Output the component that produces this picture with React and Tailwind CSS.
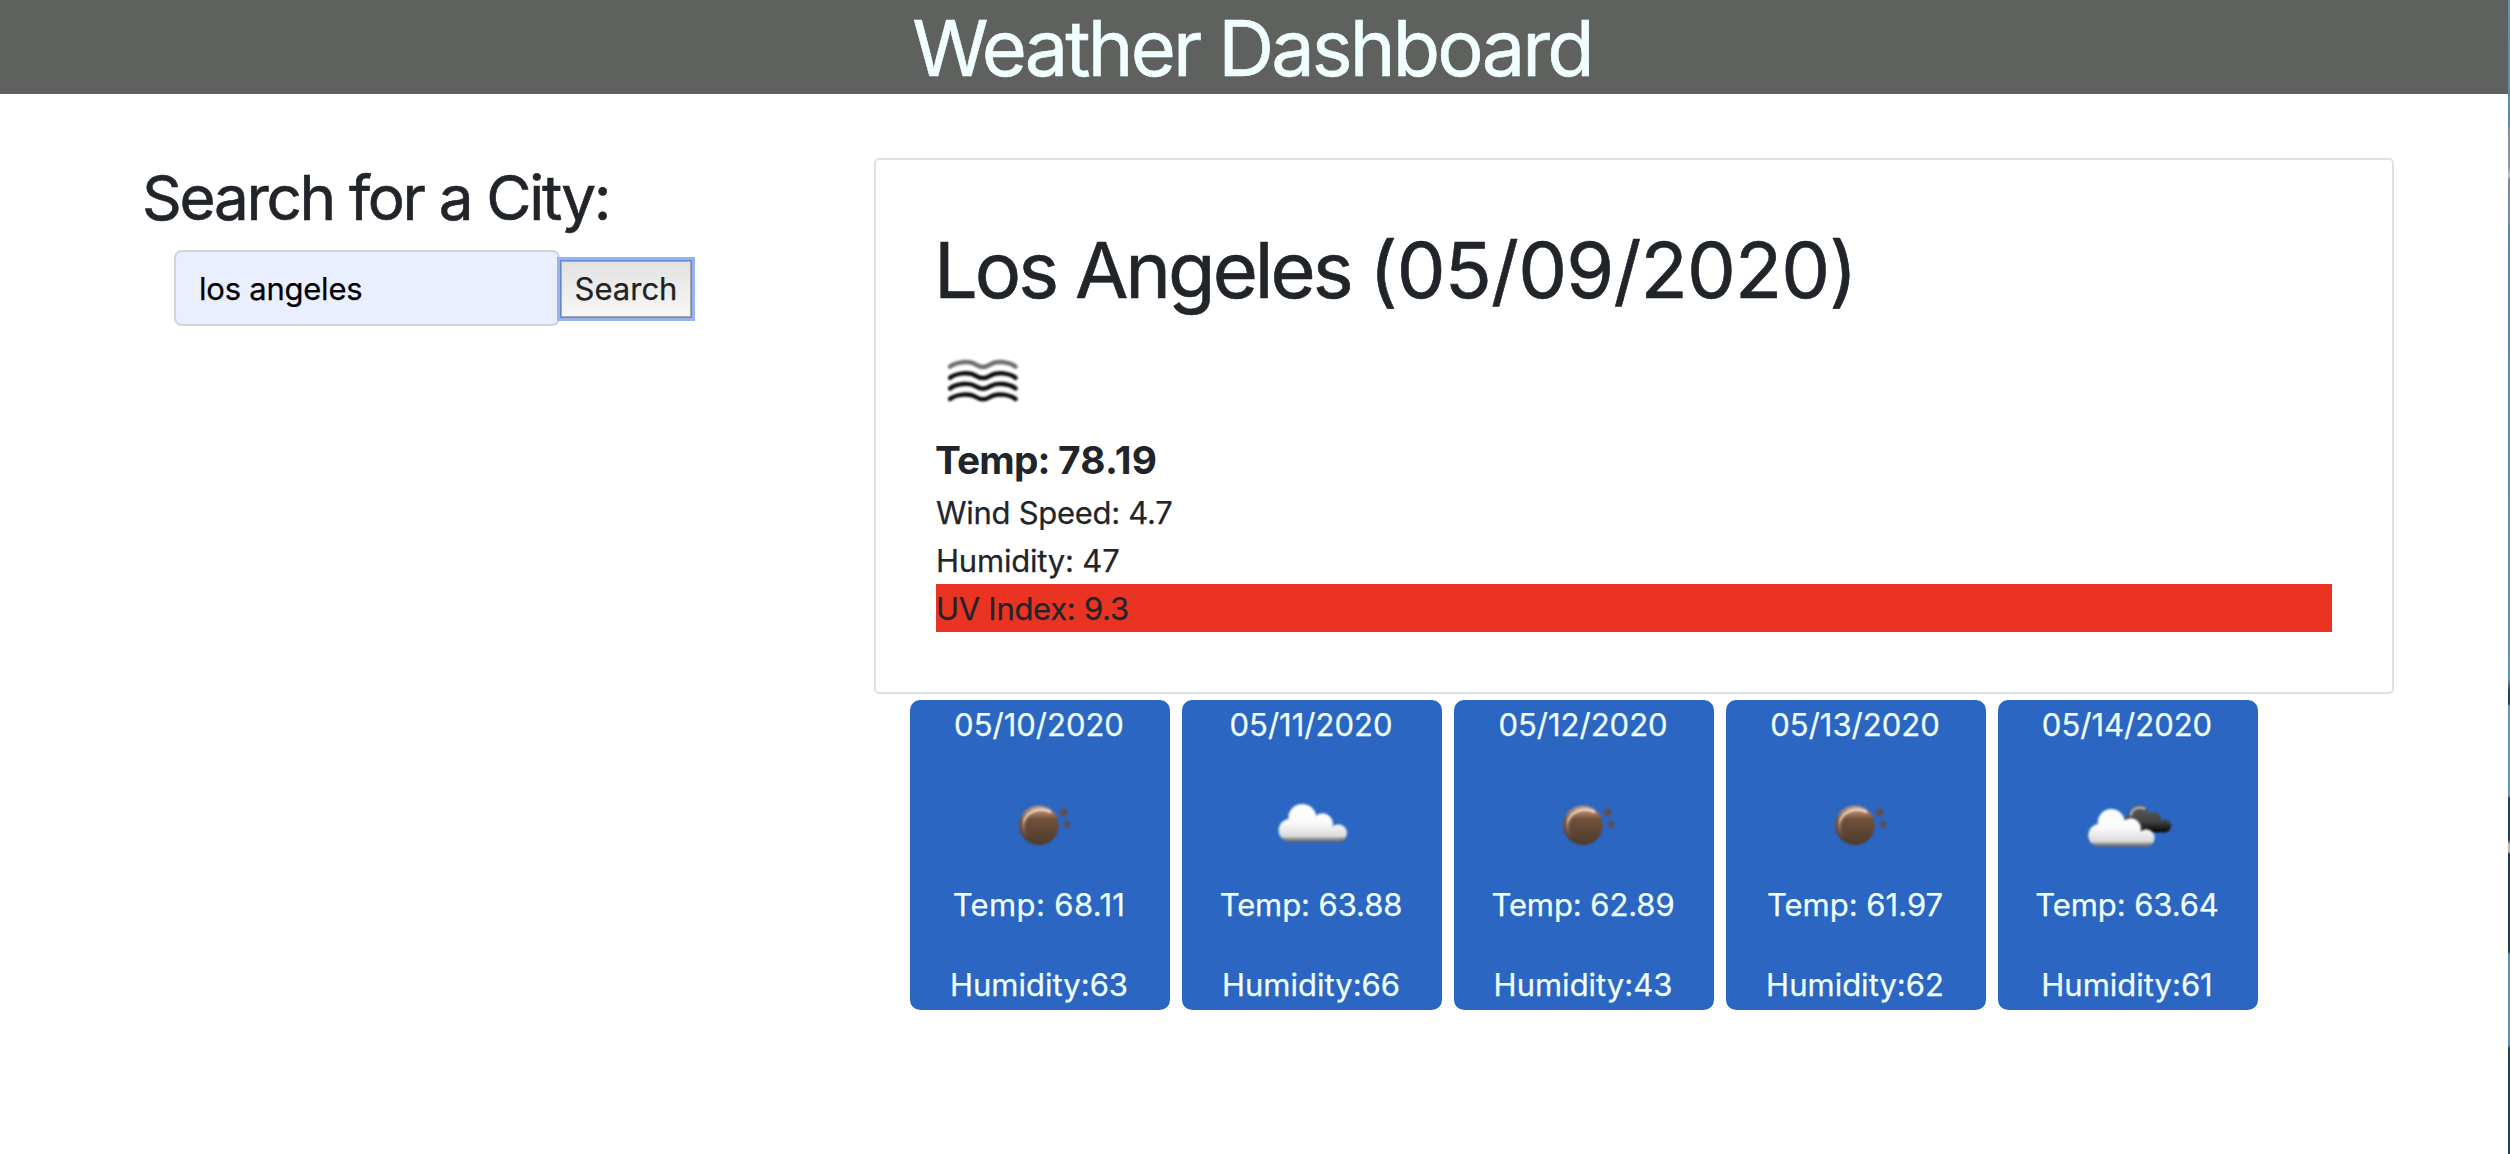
import React from "react";

const forecast = [
  { date: "05/10/2020", icon: "moon", temp: "68.11", humidity: 63, tracking: "tracking-[0.012em]" },
  { date: "05/11/2020", icon: "cloud", temp: "63.88", humidity: 66, tracking: "tracking-[-0.003em]" },
  { date: "05/12/2020", icon: "moon", temp: "62.89", humidity: 43, tracking: "tracking-[-0.003em]" },
  { date: "05/13/2020", icon: "moon", temp: "61.97", humidity: 62, tracking: "tracking-normal" },
  { date: "05/14/2020", icon: "clouds", temp: "63.64", humidity: 61, tracking: "tracking-[-0.003em]" },
];

function Gradients() {
  return (
    <svg className="absolute size-0" aria-hidden="true">
      <defs>
        <linearGradient id="white-cloud" gradientUnits="userSpaceOnUse" x1="0" y1="29" x2="0" y2="67">
          <stop offset="0" stopColor="#ffffff" />
          <stop offset="0.5" stopColor="#fafafa" />
          <stop offset="0.86" stopColor="#dadada" />
          <stop offset="0.92" stopColor="#8c8c8c" />
          <stop offset="1" stopColor="#686868" />
        </linearGradient>
        <linearGradient id="dark-cloud" gradientUnits="userSpaceOnUse" x1="0" y1="29" x2="0" y2="67">
          <stop offset="0" stopColor="#5c5c5c" />
          <stop offset="0.6" stopColor="#434343" />
          <stop offset="0.85" stopColor="#1c1c1c" />
          <stop offset="1" stopColor="#000000" />
        </linearGradient>
        <linearGradient id="moon-body" x1="0" y1="0" x2="0" y2="1">
          <stop offset="0" stopColor="#c39a80" />
          <stop offset="0.22" stopColor="#a07455" />
          <stop offset="0.34" stopColor="#70513a" />
          <stop offset="1" stopColor="#4e3a2b" />
        </linearGradient>
        <linearGradient id="moon-rim" x1="0.6" y1="0" x2="0.2" y2="1">
          <stop offset="0" stopColor="#eadbd2" />
          <stop offset="0.5" stopColor="#d9bfae" />
          <stop offset="1" stopColor="#8a6248" stopOpacity="0.3" />
        </linearGradient>
        <filter id="soft" x="-10%" y="-10%" width="120%" height="120%" colorInterpolationFilters="sRGB">
          <feGaussianBlur stdDeviation="0.8" />
        </filter>
      </defs>
    </svg>
  );
}

function MistIcon() {
  return (
    <svg viewBox="0 0 100 100" className="mt-3.5 block size-[100px]" fill="none" strokeWidth="4.4" strokeLinecap="round" filter="url(#soft)">
      {[34.6, 45.8, 56.4, 67].map((y, i) => (
        <path
          key={y}
          stroke={i === 0 ? "#6e6e6e" : "#0a0a0a"}
          d={`M14 ${y} C20 ${y - 4.5} 33 ${y - 6.5} 40 ${y - 2} Q47 ${y + 2.6} 54 ${y - 2} C61 ${y - 6.5} 74 ${y - 4.5} 79.5 ${y}`}
        />
      ))}
    </svg>
  );
}

function Star({ x, y, r }) {
  const points = Array.from({ length: 10 }, (_, i) => {
    const radius = i % 2 ? r * 0.52 : r;
    const a = (Math.PI * i) / 5 - Math.PI / 2;
    return `${x + radius * Math.cos(a)},${y + radius * Math.sin(a)}`;
  }).join(" ");
  return <polygon points={points} fill="#6a4a38" />;
}

function Cloud({ fill, transform }) {
  return (
    <g fill={fill} transform={transform}>
      <circle cx="28" cy="55.3" r="11.4" />
      <circle cx="40.3" cy="43" r="14" />
      <circle cx="60.5" cy="48.8" r="10.5" />
      <circle cx="76.2" cy="58" r="8.8" />
      <path d="M28 48 L62 42 L76.2 58 V66.8 H28 Z" />
    </g>
  );
}

function ForecastIcon({ name }) {
  return (
    <svg viewBox="0 0 100 100" className="mt-[27px] block size-[100px]" filter="url(#soft)">
      {name === "moon" && (
        <>
          <circle cx="49" cy="50.3" r="19.8" fill="url(#moon-body)" />
          <path d="M60 36.8 C51 32 39.5 35.5 35 43.5 C32 49.5 33 56 36 60.5" fill="none" stroke="url(#moon-rim)" strokeWidth="2.8" strokeLinecap="round" />
          <Star x={74} y={37.5} r={5.2} />
          <Star x={77} y={49.7} r={4.4} />
        </>
      )}
      {name === "cloud" && <Cloud fill="url(#white-cloud)" />}
      {name === "clouds" && (
        <>
          <g transform="translate(32 9.1) scale(0.72)">
            <Cloud fill="url(#dark-cloud)" />
            <path d="M29 43 C30 34.5 39 30.5 48 34" fill="none" stroke="#bdbdbd" strokeWidth="3" strokeLinecap="round" />
          </g>
          <Cloud fill="url(#white-cloud)" transform="translate(-5.8 5) scale(0.97 1)" />
        </>
      )}
    </svg>
  );
}

function SearchPanel() {
  return (
    <section className="w-[874px] shrink-0 pt-16 pl-[142px]">
      <h2 className="text-[62px] leading-[79px] tracking-[-0.0374em] whitespace-nowrap [-webkit-text-stroke:0.6px]">Search for a City:</h2>
      <form className="mt-[13px] ml-8 flex items-center" onSubmit={(e) => e.preventDefault()}>
        <input
          type="text"
          defaultValue="los angeles"
          className="h-[76px] w-[386px] rounded-lg border-2 border-[#ced4da] bg-[#e9effe] px-[23px] text-[31px] tracking-[-0.0075em] text-black outline-none"
        />
        <button
          type="submit"
          className="mt-0.5 h-[58px] w-[132px] border border-[#6089d0] bg-gradient-to-b from-[#e2e2e2] to-[#f7f7f7] pb-0.5 text-[31px] leading-none text-[#222222] ring-3 ring-[#97b3f4] inset-ring inset-ring-[#a9a9a9]"
        >
          Search
        </button>
      </form>
    </section>
  );
}

function CurrentWeather() {
  return (
    <article className="h-[536px] w-[1520px] rounded-[5px] border-2 border-[#dee2e6] p-[60px]">
      <h1 className="mt-0.5 -ml-0.5 text-[77.5px] leading-[96px] tracking-[-0.039em] whitespace-nowrap [-webkit-text-stroke:0.6px]">
        Los Angeles <span className="tracking-[-0.011em]">(05/09/2020)</span>
      </h1>
      <MistIcon />
      <p className="my-1 -ml-px h-12 text-[38.8px] leading-[48px] font-bold tracking-[-0.021em] [-webkit-text-stroke:0px]">
        Temp: <span className="tracking-[0.006em]">78.19</span>
      </p>
      <p className="h-12 leading-[49px] tracking-[-0.0092em]">Wind Speed: 4.7</p>
      <p className="h-12 leading-[49px] tracking-[-0.0065em]">Humidity: 47</p>
      <p className="h-12 bg-[#ea3323] leading-[49px] tracking-[-0.009em]">UV Index: 9.3</p>
    </article>
  );
}

function ForecastCard({ day }) {
  return (
    <article className="flex h-[310px] w-[260px] flex-col items-center rounded-[10px] bg-[#2b66c3] text-[#f0ffff]">
      <p className="h-12 pr-0.5 leading-[49px]">{day.date}</p>
      <ForecastIcon name={day.icon} />
      <p className={`mt-[5px] h-12 pr-0.5 leading-[49px] ${day.tracking}`}>Temp: {day.temp}</p>
      <p className="mt-8 h-12 pr-0.5 leading-[49px]">Humidity:{day.humidity}</p>
    </article>
  );
}

export default function App() {
  return (
    <div className="flex h-[1154px] w-[2510px] overflow-hidden bg-white font-['Inter',sans-serif] text-[31px] text-[#212529] [-webkit-text-stroke:0.25px]">
      <Gradients />
      <div className="w-[2508px] shrink-0">
        <header className="h-[94px] bg-[#5f615f] pr-1 text-center text-[#f0ffff]">
          <h1 className="text-[77.5px] leading-[96px] tracking-[-0.0374em] [-webkit-text-stroke:0.6px]">Weather Dashboard</h1>
        </header>
        <main className="flex">
          <SearchPanel />
          <section className="flex w-[1520px] flex-col pt-16">
            <CurrentWeather />
            <div className="mt-1.5 ml-9 flex gap-3">
              {forecast.map((day) => (
                <ForecastCard key={day.date} day={day} />
              ))}
            </div>
          </section>
        </main>
      </div>
      <div className="w-0.5 bg-[linear-gradient(#5c97b5_0px,#4f8fb0_124px,#7f8f9c_128px,#8a9aa6_168px,#c5c5c0_176px,#7c8b98_180px,#7c8fa0_222px,#4f8cae_228px,#5b97b3_680px,#2d4255_690px,#2d4255_704px,#5b9bb3_706px,#5b9bb3_796px,#2a3f52_798px,#2a3f52_840px,#b8b8ba_844px,#b8b8ba_852px,#26394c_854px,#26394c_952px,#5a93b0_954px,#5a93b0_1045px,#2a3f52_1048px,#2a3f52_1154px)]" />
    </div>
  );
}
